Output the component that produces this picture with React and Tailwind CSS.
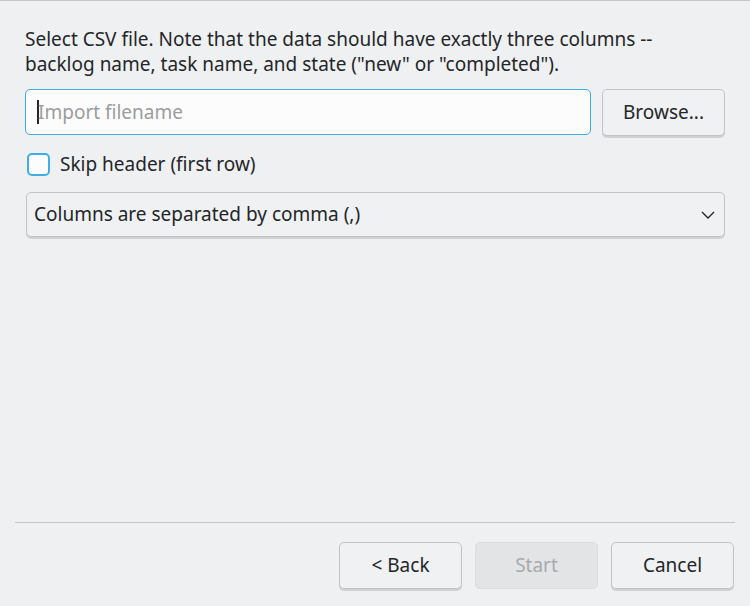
import React from 'react';

const font = { fontFamily: '"Noto Sans", "Open Sans", sans-serif' };

const Btn = ({ children, disabled }) => (
  <button
    disabled={disabled}
    className={
      disabled
        ? 'w-[123px] h-[47px] rounded-[5px] border border-[#dcdddf] bg-[#e3e4e6] text-[#a8aaac] text-[19px]'
        : 'w-[123px] h-[47px] rounded-[5px] border border-[#c1c3c6] bg-[#f0f1f2] text-[#232629] text-[19px] shadow-[0_2px_0_#d0d1d3]'
    }
  >
    {children}
  </button>
);

export default function App() {
  return (
    <div style={font} className="w-[750px] h-[606px] bg-[#eff0f1] border-t border-[#c4c6c8] flex flex-col text-[#232629]">
      <div className="flex-1 flex flex-col px-[25px] pt-[26px]">
        <p className="text-[19px] leading-[25px]">
          Select CSV file. Note that the data should have exactly three columns --
          <br />
          backlog name, task name, and state ("new" or "completed").
        </p>
        <div className="flex gap-[11px] mt-[12px]">
          <div className="flex-1 h-[46px] rounded-[5px] border border-[#3daee9] bg-[#fcfcfc] flex items-center px-[11px] text-[19px]">
            <span className="w-[2px] h-[24px] bg-[#232629] -mr-[1px]" />
            <span className="text-[#9a9c9e]">Import filename</span>
          </div>
          <button className="w-[123px] h-[47px] rounded-[5px] border border-[#c1c3c6] bg-[#f0f1f2] text-[19px] shadow-[0_2px_0_#d0d1d3]">
            Browse...
          </button>
        </div>
        <label className="flex items-center gap-[10px] mt-[16px] ml-[2px] text-[19px] h-[24px]">
          <span className="w-[23px] h-[23px] rounded-[5px] border-2 border-[#3daee9] bg-[#fcfcfc]" />
          Skip header (first row)
        </label>
        <div className="mt-[16px] h-[45px] ml-[1px] rounded-[5px] border border-[#c1c3c6] bg-[#f0f1f2] shadow-[0_2px_0_#d0d1d3] flex items-center justify-between pl-[7px] pr-[8px] text-[19px]">
          <span>Columns are separated by comma (,)</span>
          <svg width="16" height="10" viewBox="0 0 16 10" fill="none" stroke="#232629" strokeWidth="1.4">
            <path d="M2 2l6 6 6-6" />
          </svg>
        </div>
      </div>
      <div className="mx-[15px] border-t border-[#c4c6c8]" />
      <div className="flex justify-end gap-[13px] pr-[16px] pt-[19px] pb-[17px]">
        <Btn>&lt; Back</Btn>
        <Btn disabled>Start</Btn>
        <Btn>Cancel</Btn>
      </div>
    </div>
  );
}
